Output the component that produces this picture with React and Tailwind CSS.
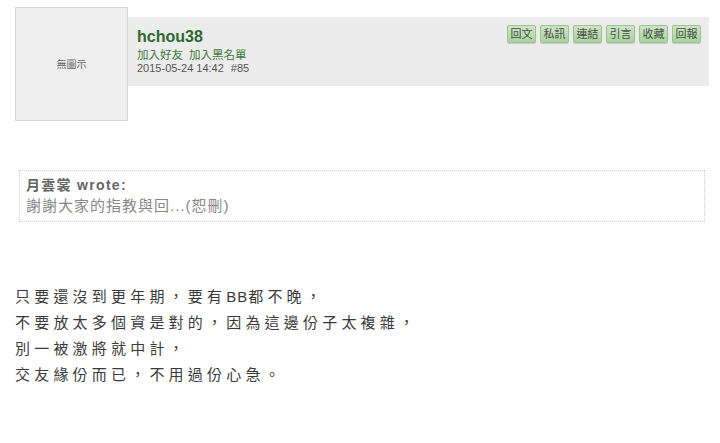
const font = { fontFamily: '"Liberation Sans", "Noto Sans CJK TC", sans-serif' };

const actions = ['回文', '私訊', '連結', '引言', '收藏', '回報'];

const PostHeader = () => (
  <div className="flex items-start">
    {/* Avatar */}
    <div className="ml-[15px] mt-[7px] w-[113px] h-[114px] shrink-0 bg-[#eeeeee] border border-[#d6d6d6] flex items-center justify-center">
      <span className="text-[10px] text-[#666]">無圖示</span>
    </div>

    {/* User bar */}
    <div className="mt-[17px] mr-[11px] flex-1 h-[69px] bg-[#ececec] flex justify-between items-start">
      <div className="pl-[9px] pt-[11px]">
        <div className="text-[16px] leading-[18px] font-bold text-[#2d6a2d]">hchou38</div>
        <div className="mt-[3px] text-[11.5px] leading-[13px] text-[#3a7a3a]">
          <span>加入好友</span>
          <span className="ml-[6px]">加入黑名單</span>
        </div>
        <div className="text-[11px] leading-[13px] text-[#555]">
          2015-05-24 14:42<span className="ml-[7px]">#85</span>
        </div>
      </div>
      <div className="pt-[8px] pr-[8px] flex gap-[4px]">
        {actions.map((a) => (
          <button
            key={a}
            className="w-[29px] h-[18px] rounded-[2px] border border-[#9cc490] bg-gradient-to-b from-[#cde6c4] to-[#a9d39d] shadow-[0_1px_1px_rgba(0,0,0,0.15)] text-[11px] leading-[16px] text-[#4a4a4a] flex items-center justify-center"
          >
            {a}
          </button>
        ))}
      </div>
    </div>
  </div>
);

const Quote = () => (
  <div className="mt-[49px] ml-[19px] mr-[15px] h-[52px] border border-dotted border-[#cfcfcf] pl-[6px] pt-[4px]">
    <div className="text-[14px] leading-[20px] font-bold text-[#666] tracking-[1.3px]">月雲裳 wrote:</div>
    <div className="text-[15px] leading-[22px] text-[#888] tracking-[1px]">謝謝大家的指教與回...(恕刪)</div>
  </div>
);

const Body = () => (
  <div className="mt-[62px] ml-[15px] text-[15px] leading-[26px] tracking-[4.2px] text-[#3a3a3a]">
    <div>
      只要還沒到更年期，要有<span className="tracking-[1px]">BB</span>都不晚，
    </div>
    <div>不要放太多個資是對的，因為這邊份子太複雜，</div>
    <div>別一被激將就中計，</div>
    <div>交友緣份而已，不用過份心急。</div>
  </div>
);

export default function App() {
  return (
    <div className="w-[720px] h-[443px] bg-white overflow-hidden" style={font}>
      <PostHeader />
      <Quote />
      <Body />
    </div>
  );
}
